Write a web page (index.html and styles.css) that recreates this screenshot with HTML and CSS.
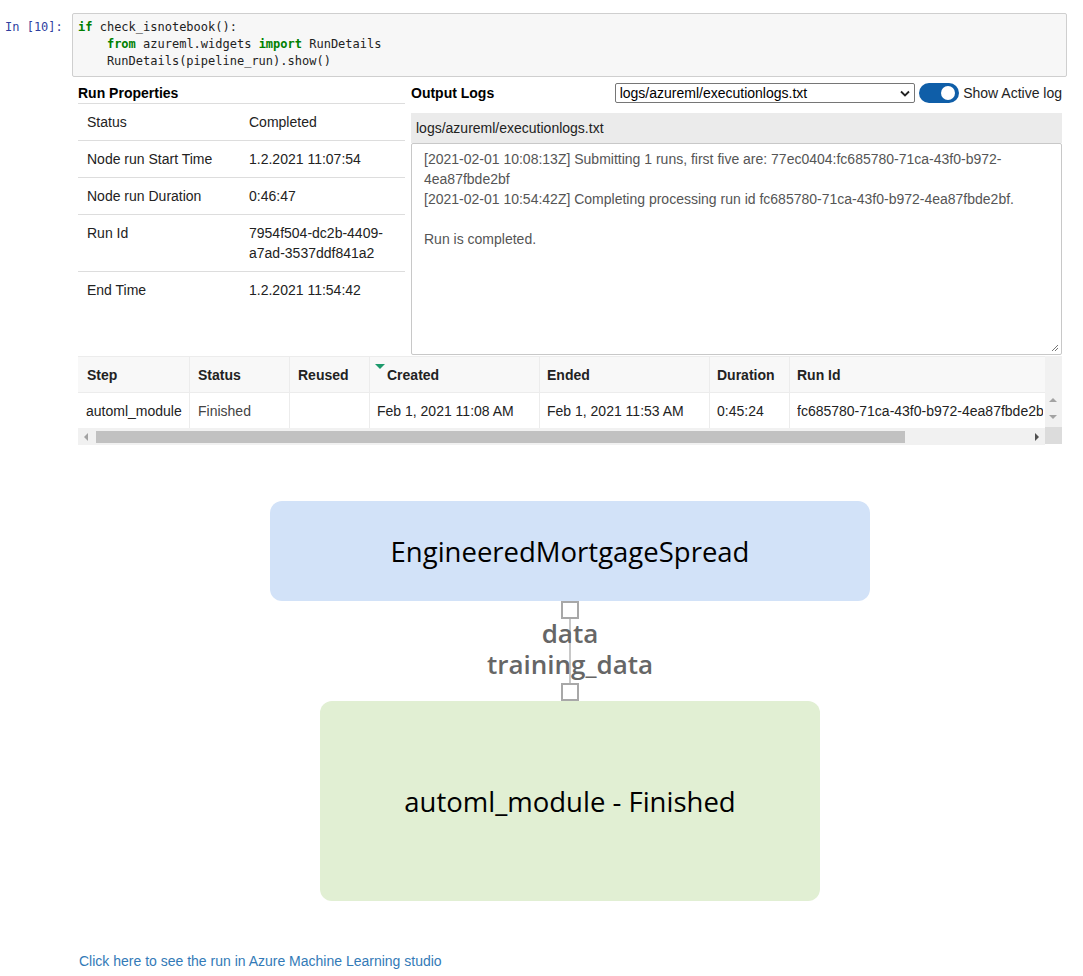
FILE: index.html
```html
<!DOCTYPE html>
<html>
<head>
<meta charset="utf-8">
<link rel="stylesheet" href="styles.css">
</head>
<body>
<div class="cell">
  <div class="prompt">In&nbsp;[10]:</div>
  <div class="code">
    <div class="cl"><span class="kw">if</span> check_isnotebook():</div>
    <div class="cl">    <span class="kw">from</span> azureml.widgets <span class="kw">import</span> RunDetails</div>
    <div class="cl">    RunDetails(pipeline_run).show()</div>
  </div>
</div>

<div class="output">
  <div class="top">
    <div class="props">
      <div class="props-title">Run Properties</div>
      <div class="prow"><div class="pk">Status</div><div class="pv">Completed</div></div>
      <div class="prow"><div class="pk">Node run Start Time</div><div class="pv">1.2.2021 11:07:54</div></div>
      <div class="prow"><div class="pk">Node run Duration</div><div class="pv">0:46:47</div></div>
      <div class="prow"><div class="pk">Run Id</div><div class="pv">7954f504-dc2b-4409-<br>a7ad-3537ddf841a2</div></div>
      <div class="prow last"><div class="pk">End Time</div><div class="pv">1.2.2021 11:54:42</div></div>
    </div>
    <div class="logs">
      <div class="logs-head">
        <div class="logs-title">Output Logs</div>
        <div class="select">
          <span>logs/azureml/executionlogs.txt</span>
          <svg class="chev" width="10" height="7" viewBox="0 0 10 7"><path d="M1 1.5 L5 5.5 L9 1.5" fill="none" stroke="#222" stroke-width="1.8"/></svg>
        </div>
        <div class="toggle"><div class="knob"></div></div>
        <div class="toggle-label">Show Active log</div>
      </div>
      <div class="logbar">logs/azureml/executionlogs.txt</div>
      <div class="logbox">
        <div>[2021-02-01 10:08:13Z] Submitting 1 runs, first five are: 77ec0404:fc685780-71ca-43f0-b972-</div>
        <div>4ea87fbde2bf</div>
        <div>[2021-02-01 10:54:42Z] Completing processing run id fc685780-71ca-43f0-b972-4ea87fbde2bf.</div>
        <div>&nbsp;</div>
        <div>Run is completed.</div>
        <svg class="grip" width="8" height="8" viewBox="0 0 8 8"><path d="M7 1 L1 7 M7 4 L4 7" stroke="#777" stroke-width="1"/></svg>
      </div>
    </div>
  </div>

  <div class="steps">
    <div class="steps-main">
      <div class="srow shead">
        <div class="c c1">Step</div>
        <div class="c c2">Status</div>
        <div class="c c3">Reused</div>
        <div class="c c4 sorted"><span class="sortarrow"></span>Created</div>
        <div class="c c5">Ended</div>
        <div class="c c6">Duration</div>
        <div class="c c7">Run Id</div>
      </div>
      <div class="srow sdata">
        <div class="c c1">automl_module</div>
        <div class="c c2 muted">Finished</div>
        <div class="c c3"></div>
        <div class="c c4">Feb 1, 2021 11:08 AM</div>
        <div class="c c5">Feb 1, 2021 11:53 AM</div>
        <div class="c c6">0:45:24</div>
        <div class="c c7"><span class="clip">fc685780-71ca-43f0-b972-4ea87fbde2bf</span></div>
      </div>
      <div class="hscroll">
        <span class="arr arr-left"></span>
        <div class="thumb"></div>
        <span class="arr arr-right"></span>
      </div>
    </div>
    <div class="vscroll">
      <div class="vtop"></div>
      <div class="vmid">
        <span class="arr arr-up"></span>
        <span class="arr arr-down"></span>
      </div>
      <div class="vcorner"></div>
    </div>
  </div>

  <div class="graph">
    <div class="node node-blue">EngineeredMortgageSpread</div>
    <div class="conn">
      <div class="port"></div>
      <div class="edge">
        <div class="edge-line"></div>
        <div class="edge-label">data</div>
        <div class="edge-label">training_data</div>
      </div>
      <div class="port"></div>
    </div>
    <div class="node node-green">automl_module - Finished</div>
  </div>

  <a class="studio" href="#">Click here to see the run in Azure Machine Learning studio</a>
</div>
</body>
</html>
```

FILE: styles.css
```css
html, body {
  margin: 0;
  padding: 0;
  background: #fff;
}
body {
  font-family: "Liberation Sans", Arial, sans-serif;
  font-size: 14px;
  color: #000;
  width: 1083px;
  height: 976px;
  overflow: hidden;
}

/* code cell */
.cell {
  display: flex;
  padding-top: 13px;
}
.prompt {
  width: 67px;
  padding-left: 5px;
  padding-top: 6px;
  font-family: "DejaVu Sans Mono", monospace;
  font-size: 12px;
  line-height: 17px;
  color: #303f9f;
}
.code {
  width: 988px;
  border: 1px solid #cfcfcf;
  border-radius: 2px;
  background: #f7f7f7;
  padding: 5px 0 6px 5px;
  font-family: "DejaVu Sans Mono", monospace;
  font-size: 12px;
  line-height: 17px;
  color: #222;
}
.cl {
  white-space: pre;
}
.kw {
  color: #008000;
  font-weight: bold;
}

/* output */
.output {
  margin-left: 78px;
  width: 984px;
  padding-top: 6px;
}
.top {
  display: flex;
  gap: 6px;
}
.props {
  width: 327px;
}
.props-title {
  font-weight: bold;
  height: 20px;
  line-height: 20px;
  border-bottom: 1px solid #ddd;
}
.prow {
  display: grid;
  grid-template-columns: 163px 164px;
  border-bottom: 1px solid #ddd;
  line-height: 20px;
}
.prow.last {
  border-bottom: none;
}
.pk, .pv {
  padding: 8px 8px;
  color: #222;
}
.pk { padding-left: 9px; }

.logs {
  width: 651px;
}
.logs-head {
  display: flex;
  align-items: center;
  height: 20px;
}
.logs-title {
  font-weight: bold;
  width: 204px;
}
.select {
  height: 18px;
  border: 1px solid #767676;
  border-radius: 2px;
  display: flex;
  align-items: center;
  justify-content: space-between;
  padding: 0 4px 0 4px;
  width: 291px;
  color: #000;
}
.chev { margin-top: 1px; }
.toggle {
  margin-left: 4px;
  width: 40px;
  height: 20px;
  border-radius: 10px;
  background: #0f5ea8;
  position: relative;
}
.knob {
  position: absolute;
  right: 4px;
  top: 3px;
  width: 14px;
  height: 14px;
  border-radius: 50%;
  background: #fff;
}
.toggle-label {
  margin-left: 4px;
  white-space: nowrap;
  color: #222;
}
.logbar {
  margin-top: 10px;
  height: 30px;
  line-height: 30px;
  background: #ebebeb;
  padding-left: 5px;
  color: #222;
}
.logbox {
  position: relative;
  height: 200px;
  border: 1px solid #c8c8c8;
  border-radius: 2px;
  padding: 5px 12px 5px 12px;
  line-height: 20px;
  color: #555;
  white-space: nowrap;
}
.grip {
  position: absolute;
  right: 2px;
  bottom: 2px;
}

/* steps table */
.steps {
  margin-top: 1px;
  display: flex;
  width: 984px;
}
.steps-main {
  width: 967px;
  overflow: hidden;
}
.srow {
  display: flex;
  white-space: nowrap;
}
.shead {
  height: 35px;
  background: #f8f8f8;
  border-top: 1px solid #ececec;
  font-weight: bold;
}
.sdata {
  height: 35px;
  background: #fff;
  border-top: 1px solid #ececec;
}
.c {
  box-sizing: border-box;
  padding: 0 8px;
  display: flex;
  align-items: center;
  border-right: 1px solid #ececec;
  color: #222;
  flex: none;
  overflow: hidden;
}
.sdata .c1 { padding-left: 8px; }
.c1 { width: 112px; padding-left: 9px; }
.c2 { width: 100px; }
.c3 { width: 80px; }
.c4 { width: 170px; padding-left: 7px; }
.c5 { width: 170px; padding-left: 7px; }
.c6 { width: 80px; padding-left: 7px; }
.c7 { width: 255px; padding-left: 7px; padding-right: 0; border-right: none; }
.clip {
  display: block;
  width: 246px;
  overflow: hidden;
}
.muted { color: #444; }
.sorted { position: relative; padding-left: 17px; }
.sortarrow {
  position: absolute;
  left: 5px;
  top: 7px;
  width: 0;
  height: 0;
  border-left: 5px solid transparent;
  border-right: 5px solid transparent;
  border-top: 5px solid #1d9a6c;
}
.hscroll {
  height: 17px;
  background: #f1f1f1;
  position: relative;
}
.thumb {
  position: absolute;
  left: 18px;
  top: 3px;
  width: 809px;
  height: 12px;
  background: #c1c1c1;
}
.arr {
  position: absolute;
  width: 0;
  height: 0;
}
.arr-left {
  left: 6px;
  top: 5px;
  border-top: 4px solid transparent;
  border-bottom: 4px solid transparent;
  border-right: 4px solid #a3a3a3;
}
.arr-right {
  right: 6px;
  top: 5px;
  border-top: 4px solid transparent;
  border-bottom: 4px solid transparent;
  border-left: 4px solid #505050;
}
.vscroll {
  width: 17px;
  display: flex;
  flex-direction: column;
}
.vtop {
  height: 36px;
  background: #f1f1f1;
}
.vmid {
  height: 35px;
  background: #f1f1f1;
  position: relative;
}
.arr-up {
  left: 4px;
  top: 6px;
  border-left: 4px solid transparent;
  border-right: 4px solid transparent;
  border-bottom: 4px solid #a3a3a3;
}
.arr-down {
  left: 4px;
  top: 23px;
  border-left: 4px solid transparent;
  border-right: 4px solid transparent;
  border-top: 4px solid #a3a3a3;
}
.vcorner {
  height: 17px;
  background: #dcdcdc;
}

/* graph */
.graph {
  display: flex;
  flex-direction: column;
  align-items: center;
  margin-top: 56px;
  font-family: "Open Sans", "Noto Sans", sans-serif;
}
.node {
  display: flex;
  align-items: center;
  justify-content: center;
  border-radius: 12px;
  font-size: 27.5px;
  color: #000;
}
.node-blue {
  width: 600px;
  height: 100px;
  background: #d2e2f8;
}
.node-green {
  width: 500px;
  height: 200px;
  background: #e1efd3;
}
.conn {
  display: flex;
  flex-direction: column;
  align-items: center;
}
.port {
  width: 14px;
  height: 14px;
  border: 2px solid #a8a8a8;
  background: #fff;
}
.edge {
  position: relative;
  height: 64px;
  display: flex;
  flex-direction: column;
  align-items: center;
}
.edge-line {
  position: absolute;
  left: 50%;
  top: 0;
  bottom: 0;
  width: 2px;
  margin-left: -1px;
  background: #c8c8c8;
}
.edge-label {
  position: relative;
  top: -1px;
  font-size: 26px;
  font-weight: 600;
  line-height: 31px;
  color: #666;
  white-space: nowrap;
}

.studio {
  display: block;
  margin-top: 52px;
  margin-left: 1px;
  color: #337ab7;
  text-decoration: none;
  font-size: 14px;
  line-height: 16px;
  width: max-content;
}
```
